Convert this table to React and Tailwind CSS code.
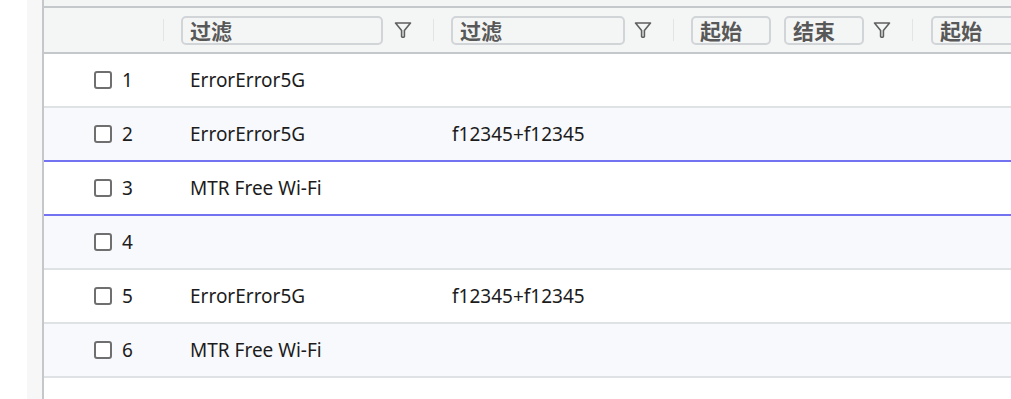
import React from "react";

const Funnel = () => (
  <svg width="20" height="20" viewBox="0 0 20 20" fill="none" stroke="#5f5f5f" strokeWidth="1.6" strokeLinejoin="round">
    <path d="M2.5 3 H17.5 L11.4 10.4 V16.4 Q10 18.2 8.6 16.4 V10.4 Z" />
  </svg>
);

const FilterInput = ({ label, w }) => (
  <div
    className={`h-[29px] ${w} shrink-0 rounded-[5px] border-2 border-[#d2d5d8] bg-[#f4f5f5] pl-[7px] flex items-center text-[21px] leading-none font-bold text-[#585858]`}
    style={{ fontFamily: '"Noto Sans CJK SC", "Noto Sans", sans-serif' }}
  >
    {label}
  </div>
);

const Sep = () => <div className="w-px h-[22px] bg-[#e2e4e6]" />;

const rows = [
  { n: 1, a: "ErrorError5G", b: "" },
  { n: 2, a: "ErrorError5G", b: "f12345+f12345" },
  { n: 3, a: "MTR Free Wi-Fi", b: "" },
  { n: 4, a: "", b: "" },
  { n: 5, a: "ErrorError5G", b: "f12345+f12345" },
  { n: 6, a: "MTR Free Wi-Fi", b: "" },
];

const grid = "grid grid-cols-[120px_270px_240px_239px_1fr]";

export default function App() {
  return (
    <div
      className="flex w-[1011px] h-[399px] overflow-hidden bg-white"
      style={{ fontFamily: '"Noto Sans", "Open Sans", sans-serif' }}
    >
      <div className="w-[27px] shrink-0 bg-white" />
      <div className="w-[15px] shrink-0 bg-[#f7f7f7]" />
      <div className="w-[2px] shrink-0 bg-[#c4c8cb]" />
      <div className="flex-1 flex flex-col min-w-0">
        <div className="h-[6px] bg-[#f3f4f4] border-b-2 border-[#c4c8cb] box-content" />
        <div className={`${grid} h-[44px] bg-[#f4f5f5] border-b-2 border-[#c4c8cb] box-content`}>
          <div className="flex items-center justify-end">
            <Sep />
          </div>
          <div className="flex items-center pl-[17px]">
            <FilterInput label="过滤" w="w-[202px]" />
            <div className="ml-[10px]"><Funnel /></div>
            <div className="ml-auto"><Sep /></div>
          </div>
          <div className="flex items-center pl-[17px]">
            <FilterInput label="过滤" w="w-[174px]" />
            <div className="ml-[8px]"><Funnel /></div>
            <div className="ml-auto"><Sep /></div>
          </div>
          <div className="flex items-center pl-[17px]">
            <FilterInput label="起始" w="w-[80px]" />
            <div className="ml-[13px]"><FilterInput label="结束" w="w-[80px]" /></div>
            <div className="ml-[8px]"><Funnel /></div>
            <div className="ml-auto"><Sep /></div>
          </div>
          <div className="flex items-center pl-[18px]">
            <FilterInput label="起始" w="w-[90px]" />
          </div>
        </div>
        {rows.map((r, i) => {
          const odd = i % 2 === 1;
          const blueBottom = i === 1 || i === 2;
          return (
            <div
              key={r.n}
              className={`${grid} h-[52px] box-content text-[19px] text-[#1c1c1c] ${
                odd ? "bg-[#f8f9fc]" : "bg-white"
              } ${blueBottom ? "border-b-2 border-[#7373f2]" : "border-b-2 border-[#dfe2e5]"}`}
            >
              <div className="flex items-center pl-[50px]">
                <div className="w-[18px] h-[18px] rounded-[3px] border-2 border-[#6f6f6f] bg-white" />
                <span className="ml-[10px]">{r.n}</span>
              </div>
              <div className="flex items-center pl-[26px]">{r.a}</div>
              <div className="flex items-center pl-[18px]">{r.b}</div>
              <div />
              <div />
            </div>
          );
        })}
      </div>
    </div>
  );
}
